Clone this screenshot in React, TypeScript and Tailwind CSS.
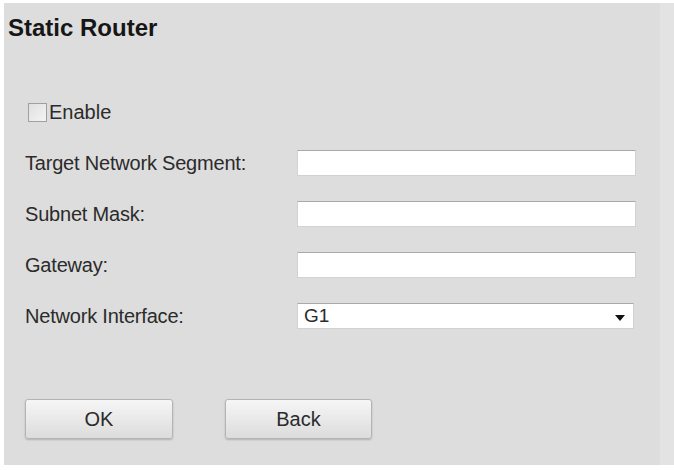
import { useState } from "react";

const rows = ["Target Network Segment:", "Subnet Mask:", "Gateway:"];

export default function App() {
  const [enabled, setEnabled] = useState(false);

  return (
    <div className="w-[674px] h-[471px] bg-white pl-[4px] pt-[3px] font-['Liberation_Sans',Arial,sans-serif]">
      <div className="flex h-[462px]">
        <div className="w-[656px] h-full bg-[#dddddd] pl-[4px] pt-[11px]">
          <h1 className="text-[24px] leading-[28px] font-bold text-[#161616]">Static Router</h1>

          <div className="pl-[17px] pt-[60px]">
            <label className="flex items-center h-[20px] text-[20px] text-[#2b2b2b]">
              <input
                type="checkbox"
                checked={enabled}
                onChange={() => setEnabled(!enabled)}
                className="appearance-none w-[19px] h-[19px] border border-[#a0a0a0] bg-gradient-to-br from-[#e0e0e0] to-[#f4f4f4] mr-[2px] ml-[3px]"
              />
              Enable
            </label>

            <div className="flex flex-col gap-[25px] pt-[28px]">
              {rows.map((r) => (
                <div key={r} className="flex items-center h-[26px]">
                  <span className="w-[272px] text-[20px] text-[#2b2b2b] tracking-[-0.2px]">{r}</span>
                  <input className="w-[339px] h-[26px] bg-white border border-[#d2d2d2] border-t-[#a9a9a9] outline-none" />
                </div>
              ))}
              <div className="flex items-center h-[26px]">
                <span className="w-[272px] text-[20px] text-[#2b2b2b] tracking-[-0.2px]">Network Interface:</span>
                <div className="relative w-[337px] h-[26px] bg-white border border-[#d2d2d2] border-t-[#a9a9a9] flex items-center pl-[6px] text-[19px] text-[#2a2a2a]">
                  G1
                  <svg className="absolute right-[8px] top-[11px]" width="10" height="6" viewBox="0 0 10 6">
                    <path d="M0 0H10L5 6Z" fill="#111" />
                  </svg>
                </div>
              </div>
            </div>

            <div className="flex gap-[52px] pt-[70px]">
              <button className="w-[148px] h-[40px] rounded-[3px] border border-[#b4b4b4] bg-gradient-to-b from-[#f6f6f6] to-[#dcdcdc] shadow-[0_1px_2px_rgba(0,0,0,0.2)] text-[20px] text-[#2b2b2b]">
                OK
              </button>
              <button className="w-[147px] h-[40px] rounded-[3px] border border-[#b4b4b4] bg-gradient-to-b from-[#f6f6f6] to-[#dcdcdc] shadow-[0_1px_2px_rgba(0,0,0,0.2)] text-[20px] text-[#2b2b2b]">
                Back
              </button>
            </div>
          </div>
        </div>
        <div className="flex-1 bg-[#e3e3e3]" />
      </div>
    </div>
  );
}
